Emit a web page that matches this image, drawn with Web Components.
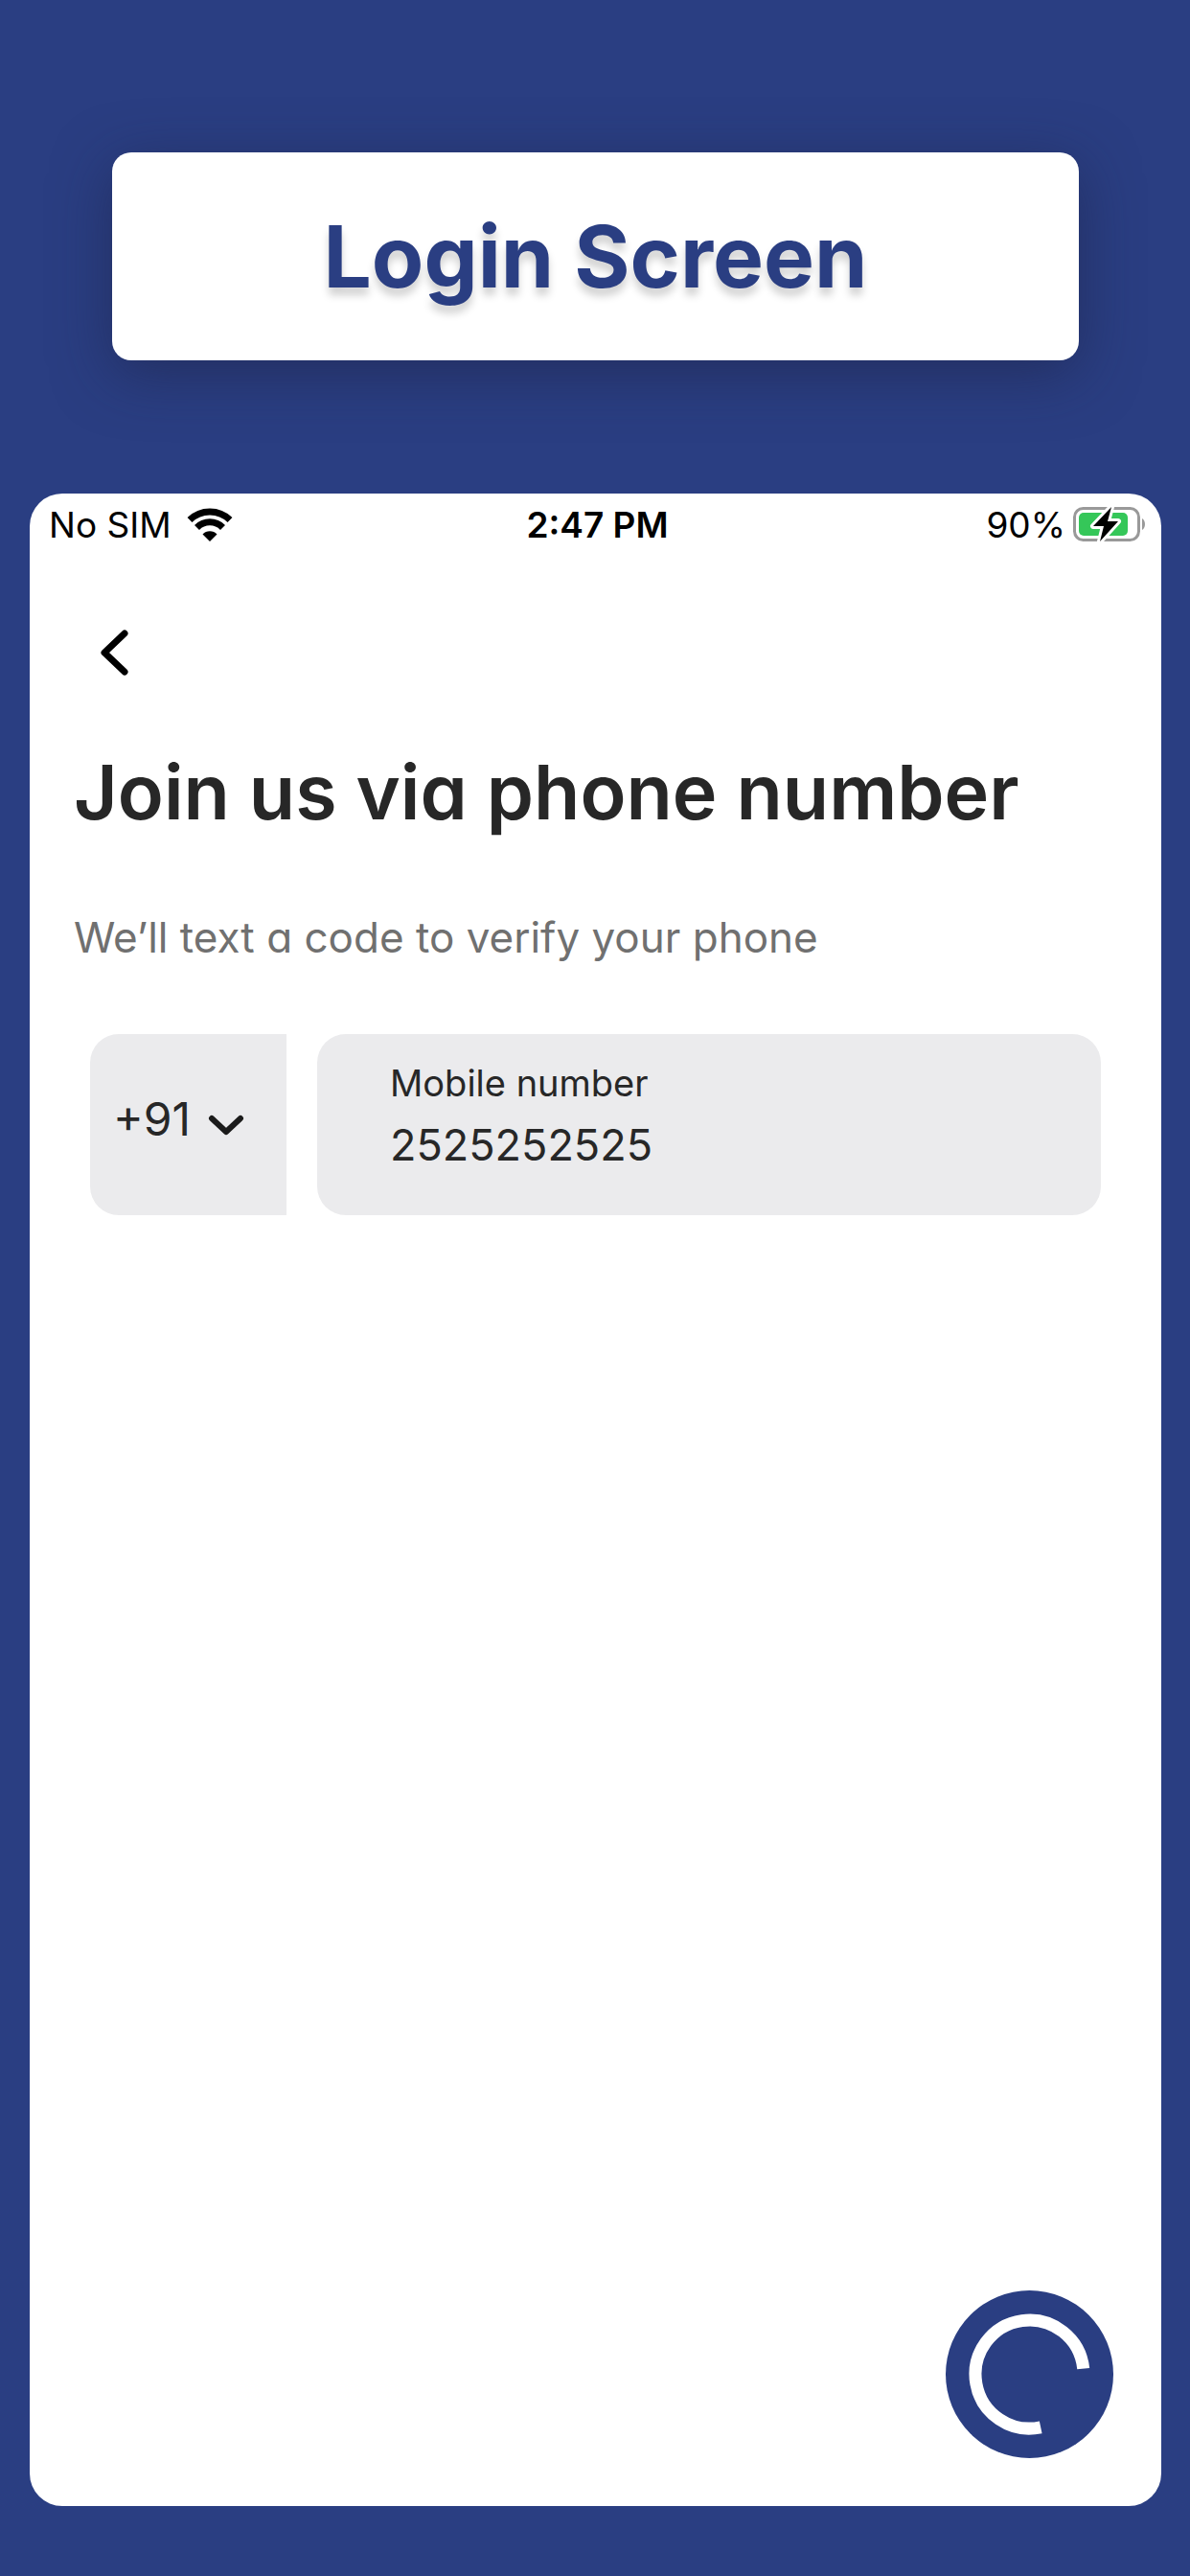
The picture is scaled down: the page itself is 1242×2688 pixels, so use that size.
<!DOCTYPE html>
<html lang="en">
<head>
<meta charset="utf-8">
<meta name="viewport" content="width=device-width, initial-scale=1">
<title>Login Screen</title>
<style>
	body {
		margin: 0;
		font-family: Inter, "Liberation Sans", sans-serif;
	}
</style>
</head>
<body>
<login-showcase>
	<title-banner slot="title">Login Screen</title-banner>
	<phone-screen>
		<status-bar slot="status" carrier="No SIM" time="2:47 PM" battery="90%"></status-bar>
		<join-form heading="Join us via phone number" hint="We’ll text a code to verify your phone">
			<country-code></country-code>
			<phone-field label="Mobile number" value="2525252525"></phone-field>
		</join-form>
		<loading-button slot="action"></loading-button>
	</phone-screen>
</login-showcase>

<script>
(function() {
	function define(name, html, setup) {
		let template = document.createElement("template");
		template.innerHTML = html;

		class Element extends HTMLElement {
			constructor() {
				super();
				this._shadowRoot = this.attachShadow({mode: "open"});
				this._shadowRoot.appendChild(template.content.cloneNode(true));
			}

			connectedCallback() {
				// copy attributes into the nodes that name them
				this._shadowRoot.querySelectorAll("[data-text]").forEach(node => {
					node.textContent = this.getAttribute(node.dataset.text);
				});
				if (setup) setup(this, this._shadowRoot);
			}
		}

		customElements.define(name, Element);
	}

	define("login-showcase", `
		<style>
		:host {
			--brand: #2a3e82;
			--field: #ebebed;
			--ink: #272727;
			display: flex;
			flex-direction: column;
			box-sizing: border-box;
			min-height: 100vh;
			padding: 159px 30px 73px 31px;
			background: var(--brand);
		}
		::slotted(*) {
			flex: 1;
		}
		::slotted([slot="title"]) {
			flex: none;
			margin: 0 86px 139px;
		}
		</style>
		<slot name="title"></slot>
		<slot></slot>
	`);

	define("title-banner", `
		<style>
		:host {
			display: block;
			padding: 60px 40px;
			border-radius: 20px;
			background: #fff;
			box-shadow: 0 14px 60px rgba(30, 35, 70, .55);
		}
		h1 {
			margin: 0;
			font-size: 89px;
			font-weight: 700;
			line-height: 97px;
			text-align: center;
			color: var(--brand);
			text-shadow: 0 8px 8px rgba(0, 0, 0, .18);
		}
		</style>
		<h1><slot></slot></h1>
	`);

	define("phone-screen", `
		<style>
		:host {
			display: flex;
			flex-direction: column;
			border-radius: 34px;
			background: #fff;
			overflow: hidden;
		}
		main {
			flex: 1;
			padding: 60px 46px 0;
		}
		footer {
			display: flex;
			justify-content: flex-end;
			padding: 50px;
		}
		</style>
		<slot name="status"></slot>
		<main><slot></slot></main>
		<footer><slot name="action"></slot></footer>
	`);

	define("status-bar", `
		<style>
		:host {
			display: grid;
			grid-template-columns: 1fr auto 1fr;
			align-items: center;
			height: 64px;
			padding: 0 16px 0 20px;
			font-size: 37px;
			color: #000;
		}
		div {
			display: flex;
			align-items: center;
			gap: 16px;
		}
		.power {
			justify-content: flex-end;
			gap: 8px;
		}
		time {
			font-weight: 600;
		}
		svg {
			display: block;
		}
		</style>
		<div>
			<span data-text="carrier"></span>
			<svg width="48" height="36" viewBox="0 0 48 36" aria-hidden="true">
				<g fill="none" stroke="#000" stroke-width="7">
					<path d="M3 13.500A30 30 0 0 1 45 13.500"/>
					<path d="M10.500 21.500A19 19 0 0 1 37.500 21.500"/>
				</g>
				<path d="M24 36L16.500 28.500A10.500 10.500 0 0 1 31.500 28.500Z"/>
			</svg>
		</div>
		<time data-text="time"></time>
		<div class="power">
			<span data-text="battery"></span>
			<svg width="76" height="38" viewBox="0 0 76 38" aria-hidden="true">
				<rect x="1.500" y="2.500" width="67" height="33" rx="9" fill="none" stroke="#999" stroke-width="3"/>
				<path d="M72 13C76 15 76 23 72 25Z" fill="#999"/>
				<rect x="6" y="7" width="51" height="24" rx="5" fill="#35c759"/>
				<path d="M40 1L21 21H32L28 37L47 16H36Z" stroke="#fff" stroke-width="6" stroke-linejoin="round"/>
				<path d="M40 1L21 21H32L28 37L47 16H36Z"/>
			</svg>
		</div>
	`);

	define("join-form", `
		<style>
		:host {
			display: block;
			/* single-storey a */
			font-feature-settings: "cv11";
		}
		button {
			display: grid;
			place-items: center;
			width: 84px;
			height: 84px;
			padding: 0;
			border: 0;
			background: none;
		}
		h2 {
			margin: 55px 0 76px;
			font-size: 79px;
			font-weight: 600;
			line-height: 96px;
			color: var(--ink);
		}
		p {
			margin: 0 0 73px;
			font-size: 44px;
			line-height: 56px;
			color: #707070;
		}
		form {
			display: flex;
			gap: 32px;
			padding: 0 17px;
		}
		</style>
		<button type="button" aria-label="Back">
			<svg width="32" height="50" viewBox="0 0 32 50">
				<path d="M27 5L6 25L27 45" fill="none" stroke="#000" stroke-width="7" stroke-linecap="round" stroke-linejoin="round"/>
			</svg>
		</button>
		<h2 data-text="heading"></h2>
		<p data-text="hint"></p>
		<form><slot></slot></form>
	`);

	define("country-code", `
		<style>
		:host {
			display: grid;
			align-items: center;
			box-sizing: border-box;
			width: 205px;
			padding-bottom: 13px;
			border-radius: 30px 0 0 30px;
			background: var(--field);
		}
		select, svg {
			grid-area: 1 / 1;
		}
		select {
			appearance: none;
			width: 100%;
			padding: 0 0 0 24px;
			border: 0;
			background: none;
			font: inherit;
			font-size: 48px;
			color: var(--ink);
		}
		svg {
			justify-self: end;
			margin: 14px 44px 0 0;
			pointer-events: none;
		}
		</style>
		<select aria-label="Country code">
			<option>+91</option>
		</select>
		<svg width="38" height="24" viewBox="0 0 38 24" aria-hidden="true">
			<path d="M4 5L19 19L34 5" fill="none" stroke="#1b1b1b" stroke-width="6" stroke-linecap="round" stroke-linejoin="round"/>
		</svg>
	`);

	define("phone-field", `
		<style>
		:host {
			display: flex;
			flex: 1;
			flex-direction: column;
			gap: 12px;
			min-width: 0;
			padding: 27px 76px 46px;
			border-radius: 30px;
			background: var(--field);
			color: var(--ink);
		}
		label {
			font-size: 38px;
			line-height: 48px;
		}
		input {
			width: 100%;
			height: 56px;
			padding: 0;
			border: 0;
			outline: 0;
			background: none;
			font: inherit;
			font-size: 45px;
			color: inherit;
		}
		</style>
		<label for="number" data-text="label"></label>
		<input id="number" type="tel">
	`, (host, root) => {
		root.getElementById("number").value = host.getAttribute("value");
	});

	define("loading-button", `
		<style>
		:host {
			display: block;
		}
		button {
			display: block;
			width: 175px;
			height: 175px;
			padding: 0;
			border: 0;
			border-radius: 50%;
			background: var(--brand);
		}
		svg {
			display: block;
		}
		</style>
		<button type="button" aria-label="Loading">
			<svg width="175" height="175" viewBox="-87.500 -87.500 175 175">
				<path d="M11.700 55.300A56.500 56.500 0 1 1 56.200 -5.900" fill="none" stroke="#fff" stroke-width="13"/>
			</svg>
		</button>
	`);
})();
</script>
</body>
</html>
